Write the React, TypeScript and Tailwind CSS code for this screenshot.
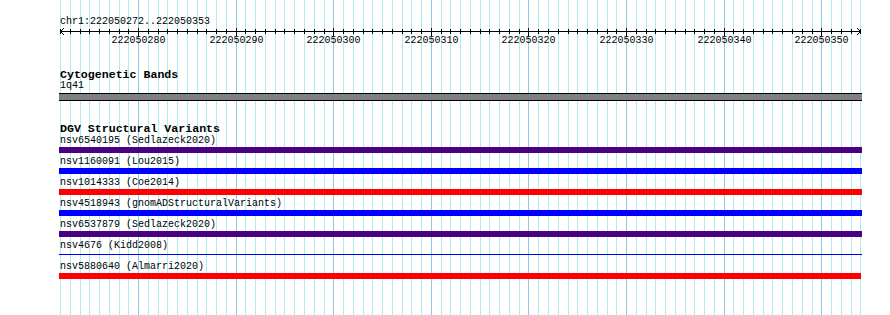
import React from "react";

const X0 = 60;
const STEP = 9.76;
const xAt = (i: number) => Math.round(X0 + i * STEP);
const BASES = Array.from({ length: 83 }, (_, i) => i);
const MAJORS = [8, 18, 28, 38, 48, 58, 68, 78];

type Row = { label: string; bar: string; width: string; thin?: boolean };

const ROWS: Row[] = [
  { label: "nsv6540195 (Sedlazeck2020)", bar: "bg-[#4b0082]", width: "w-[803px]" },
  { label: "nsv1160091 (Lou2015)", bar: "bg-[#0000ff]", width: "w-[803px]" },
  { label: "nsv1014333 (Coe2014)", bar: "bg-[#ff0000]", width: "w-[803px]" },
  { label: "nsv4518943 (gnomADStructuralVariants)", bar: "bg-[#0000ff]", width: "w-[803px]" },
  { label: "nsv6537879 (Sedlazeck2020)", bar: "bg-[#4b0082]", width: "w-[803px]" },
  { label: "nsv4676 (Kidd2008)", bar: "bg-[#0000ff]", width: "w-[803px]", thin: true },
  { label: "nsv5880640 (Almarri2020)", bar: "bg-[#ff0000]", width: "w-[802px]" },
];

function Grid() {
  return (
    <svg className="absolute left-0 top-0" width={890} height={315} shapeRendering="crispEdges">
      {BASES.map((i) => (
        <rect
          key={i}
          x={xAt(i)}
          y={0}
          width={1}
          height={315}
          fill={MAJORS.includes(i) ? "#8ec9e6" : "#b0ecf0"}
        />
      ))}
    </svg>
  );
}

function Ruler() {
  return (
    <svg className="block" width={890} height={18} shapeRendering="crispEdges">
      <rect x={60} y={3} width={801} height={1} fill="#000" />
      {BASES.map((i) =>
        MAJORS.includes(i) ? (
          <rect key={i} x={xAt(i)} y={0} width={1} height={8} fill="#000" />
        ) : (
          <rect key={i} x={xAt(i)} y={1} width={1} height={5} fill="#000" />
        )
      )}
      <polyline points="64,0 60.5,3.5 64,7" fill="none" stroke="#000" strokeWidth={1} shapeRendering="auto" />
      <polyline points="857,0 860.5,3.5 857,7" fill="none" stroke="#000" strokeWidth={1} shapeRendering="auto" />
      {MAJORS.map((i, k) => (
        <text key={i} x={xAt(i) + 0.5} y={15} fontSize={10} textAnchor="middle" fill="#000">
          {String(222050280 + k * 10)}
        </text>
      ))}
    </svg>
  );
}

export default function App() {
  return (
    <div className="relative w-[890px] h-[315px] bg-white overflow-hidden text-black font-['Liberation_Mono',monospace]">
      <Grid />
      <div className="relative">
        <div className="pt-[16px] pl-[60px] text-[10px] leading-[12px]">chr1:222050272..222050353</div>
        <Ruler />
        <div className="mt-[23px] pl-[60px] text-[11.6px] leading-[11px] font-bold">Cytogenetic Bands</div>
        <div className="pl-[60px] text-[10px] leading-[12px]">1q41</div>
        <div className="mt-[1px] ml-[59px] w-[803px] h-[8px] bg-[#808080] border-y border-black" />
        <div className="mt-[22px] pl-[60px] text-[11.6px] leading-[11px] font-bold">DGV Structural Variants</div>
        <div className="mt-[1px] flex flex-col gap-[3px]">
          {ROWS.map((r) => (
            <div key={r.label} className="flex flex-col">
              <div className="pl-[60px] text-[10px] leading-[12px] whitespace-pre">{r.label}</div>
              {r.thin ? (
                <div className="h-[6px] pt-[2px]">
                  <div className={`ml-[59px] ${r.width} h-[1px] ${r.bar}`} />
                </div>
              ) : (
                <div className={`ml-[59px] ${r.width} h-[6px] ${r.bar}`} />
              )}
            </div>
          ))}
        </div>
      </div>
    </div>
  );
}
